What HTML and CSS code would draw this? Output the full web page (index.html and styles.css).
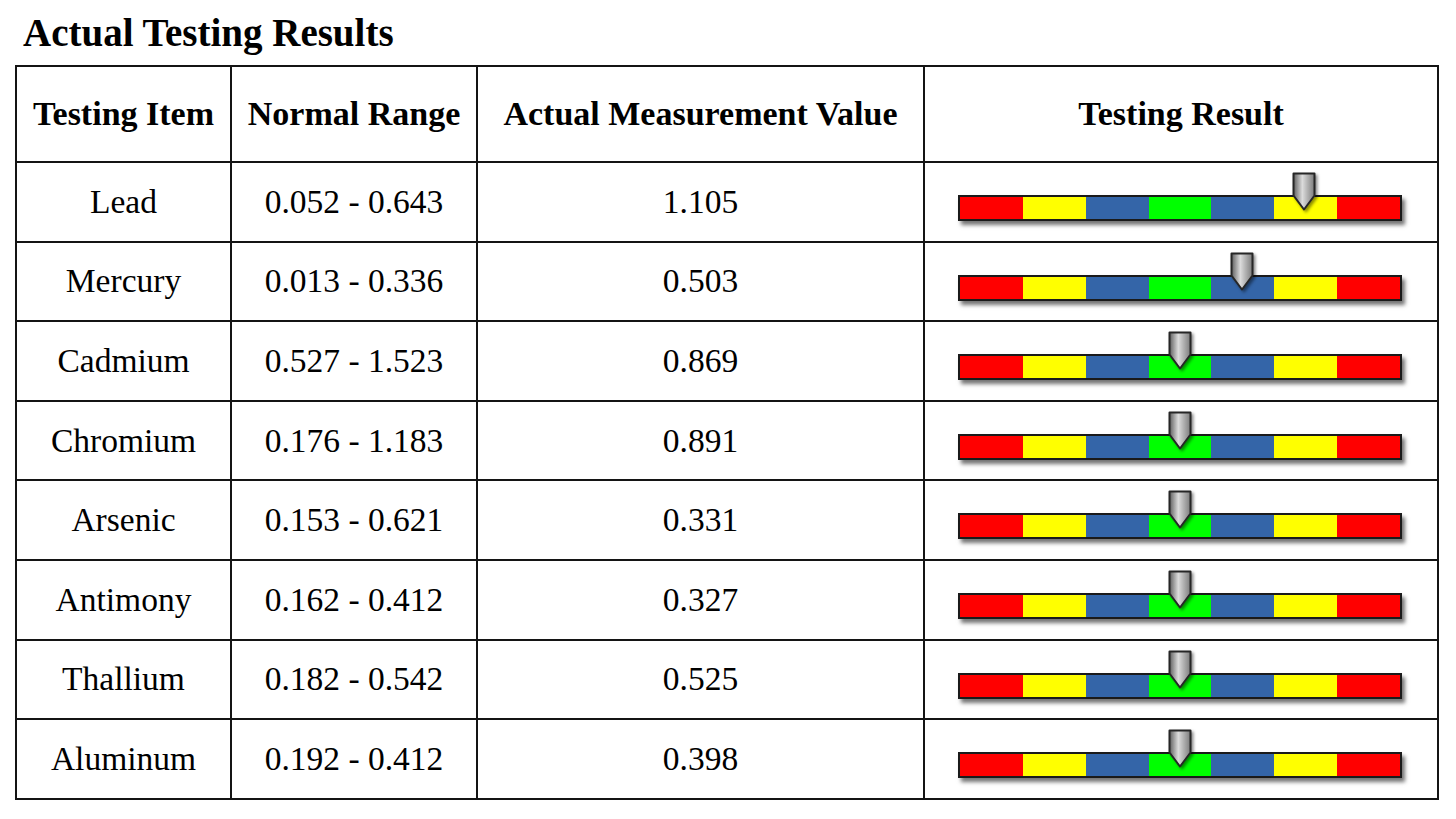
FILE: index.html
```html
<!DOCTYPE html>
<html lang="en">
<head>
<meta charset="utf-8">
<title>Actual Testing Results</title>
<link rel="stylesheet" href="styles.css">
</head>
<body>
<h1 class="title">Actual Testing Results</h1>
<table class="results">
  <colgroup>
    <col class="c1"><col class="c2"><col class="c3"><col class="c4">
  </colgroup>
  <thead>
    <tr><th>Testing Item</th><th>Normal Range</th><th>Actual Measurement Value</th><th>Testing Result</th></tr>
  </thead>
  <tbody>
    <tr><td>Lead</td><td>0.052 - 0.643</td><td>1.105</td><td class="gcell"><div class="gauge"><div class="bar"><span class="r"></span><span class="y"></span><span class="b"></span><span class="g"></span><span class="b"></span><span class="y"></span><span class="r"></span></div><svg class="marker" style="left:334px" width="25" height="40" viewBox="0 0 25 40"><defs><linearGradient id="mg1" x1="0" x2="1" y1="0" y2="0"><stop offset="0" stop-color="#5e5e5e"/><stop offset="0.42" stop-color="#dcdcdc"/><stop offset="0.6" stop-color="#bdbdbd"/><stop offset="1" stop-color="#7c7c7c"/></linearGradient></defs><path d="M1.5 1.5 H22.5 V23.5 L12 37.5 L1.5 23.5 Z" fill="url(#mg1)" stroke="#262626" stroke-width="2" stroke-linejoin="round"/></svg></div></td></tr>
    <tr><td>Mercury</td><td>0.013 - 0.336</td><td>0.503</td><td class="gcell"><div class="gauge"><div class="bar"><span class="r"></span><span class="y"></span><span class="b"></span><span class="g"></span><span class="b"></span><span class="y"></span><span class="r"></span></div><svg class="marker" style="left:272px" width="25" height="40" viewBox="0 0 25 40"><path d="M1.5 1.5 H22.5 V23.5 L12 37.5 L1.5 23.5 Z" fill="url(#mg1)" stroke="#262626" stroke-width="2" stroke-linejoin="round"/></svg></div></td></tr>
    <tr><td>Cadmium</td><td>0.527 - 1.523</td><td>0.869</td><td class="gcell"><div class="gauge"><div class="bar"><span class="r"></span><span class="y"></span><span class="b"></span><span class="g"></span><span class="b"></span><span class="y"></span><span class="r"></span></div><svg class="marker" style="left:210px" width="25" height="40" viewBox="0 0 25 40"><path d="M1.5 1.5 H22.5 V23.5 L12 37.5 L1.5 23.5 Z" fill="url(#mg1)" stroke="#262626" stroke-width="2" stroke-linejoin="round"/></svg></div></td></tr>
    <tr><td>Chromium</td><td>0.176 - 1.183</td><td>0.891</td><td class="gcell"><div class="gauge"><div class="bar"><span class="r"></span><span class="y"></span><span class="b"></span><span class="g"></span><span class="b"></span><span class="y"></span><span class="r"></span></div><svg class="marker" style="left:210px" width="25" height="40" viewBox="0 0 25 40"><path d="M1.5 1.5 H22.5 V23.5 L12 37.5 L1.5 23.5 Z" fill="url(#mg1)" stroke="#262626" stroke-width="2" stroke-linejoin="round"/></svg></div></td></tr>
    <tr><td>Arsenic</td><td>0.153 - 0.621</td><td>0.331</td><td class="gcell"><div class="gauge"><div class="bar"><span class="r"></span><span class="y"></span><span class="b"></span><span class="g"></span><span class="b"></span><span class="y"></span><span class="r"></span></div><svg class="marker" style="left:210px" width="25" height="40" viewBox="0 0 25 40"><path d="M1.5 1.5 H22.5 V23.5 L12 37.5 L1.5 23.5 Z" fill="url(#mg1)" stroke="#262626" stroke-width="2" stroke-linejoin="round"/></svg></div></td></tr>
    <tr><td>Antimony</td><td>0.162 - 0.412</td><td>0.327</td><td class="gcell"><div class="gauge"><div class="bar"><span class="r"></span><span class="y"></span><span class="b"></span><span class="g"></span><span class="b"></span><span class="y"></span><span class="r"></span></div><svg class="marker" style="left:210px" width="25" height="40" viewBox="0 0 25 40"><path d="M1.5 1.5 H22.5 V23.5 L12 37.5 L1.5 23.5 Z" fill="url(#mg1)" stroke="#262626" stroke-width="2" stroke-linejoin="round"/></svg></div></td></tr>
    <tr><td>Thallium</td><td>0.182 - 0.542</td><td>0.525</td><td class="gcell"><div class="gauge"><div class="bar"><span class="r"></span><span class="y"></span><span class="b"></span><span class="g"></span><span class="b"></span><span class="y"></span><span class="r"></span></div><svg class="marker" style="left:210px" width="25" height="40" viewBox="0 0 25 40"><path d="M1.5 1.5 H22.5 V23.5 L12 37.5 L1.5 23.5 Z" fill="url(#mg1)" stroke="#262626" stroke-width="2" stroke-linejoin="round"/></svg></div></td></tr>
    <tr><td>Aluminum</td><td>0.192 - 0.412</td><td>0.398</td><td class="gcell"><div class="gauge"><div class="bar"><span class="r"></span><span class="y"></span><span class="b"></span><span class="g"></span><span class="b"></span><span class="y"></span><span class="r"></span></div><svg class="marker" style="left:210px" width="25" height="40" viewBox="0 0 25 40"><path d="M1.5 1.5 H22.5 V23.5 L12 37.5 L1.5 23.5 Z" fill="url(#mg1)" stroke="#262626" stroke-width="2" stroke-linejoin="round"/></svg></div></td></tr>
  </tbody>
</table>
</body>
</html>
```

FILE: styles.css
```css
html, body {
  margin: 0;
  padding: 0;
  background: #ffffff;
}

body {
  font-family: "Liberation Serif", "Times New Roman", serif;
  color: #000000;
  padding: 11px 0 0 15px;
}

.title {
  margin: 0 0 10px 8px;
  font-size: 39px;
  line-height: 44px;
  font-weight: bold;
}

.results {
  border-collapse: collapse;
  table-layout: fixed;
  width: 1422px;
  font-size: 33.5px;
}

.c1 { width: 215px; }
.c2 { width: 246px; }
.c3 { width: 447px; }
.c4 { width: 514px; }

.results th,
.results td {
  border: 2px solid #141414;
  text-align: center;
  vertical-align: middle;
  padding: 0;
}

.results th {
  height: 94px;
  font-weight: bold;
  font-size: 34px;
}

.results td {
  height: 77.6px;
}

.results td.gcell {
  vertical-align: top;
  text-align: left;
  padding: 0 0 0 33px;
}

.gauge {
  position: relative;
  width: 444px;
  height: 52px;
  margin-top: 9px;
}

.bar {
  position: absolute;
  left: 0;
  top: 23px;
  width: 444px;
  height: 26px;
  box-sizing: border-box;
  border: 2px solid #1a1a1a;
  display: flex;
  box-shadow: 3px 4px 4px rgba(0, 0, 0, 0.55);
}

.bar span {
  flex: 1 1 0;
  height: 100%;
}

.bar .r { background: #ff0000; }
.bar .y { background: #ffff00; }
.bar .b { background: #3465a8; }
.bar .g { background: #00ff00; }

.marker {
  position: absolute;
  top: 0;
  filter: drop-shadow(2px 2px 1.5px rgba(0, 0, 0, 0.45));
}
```
